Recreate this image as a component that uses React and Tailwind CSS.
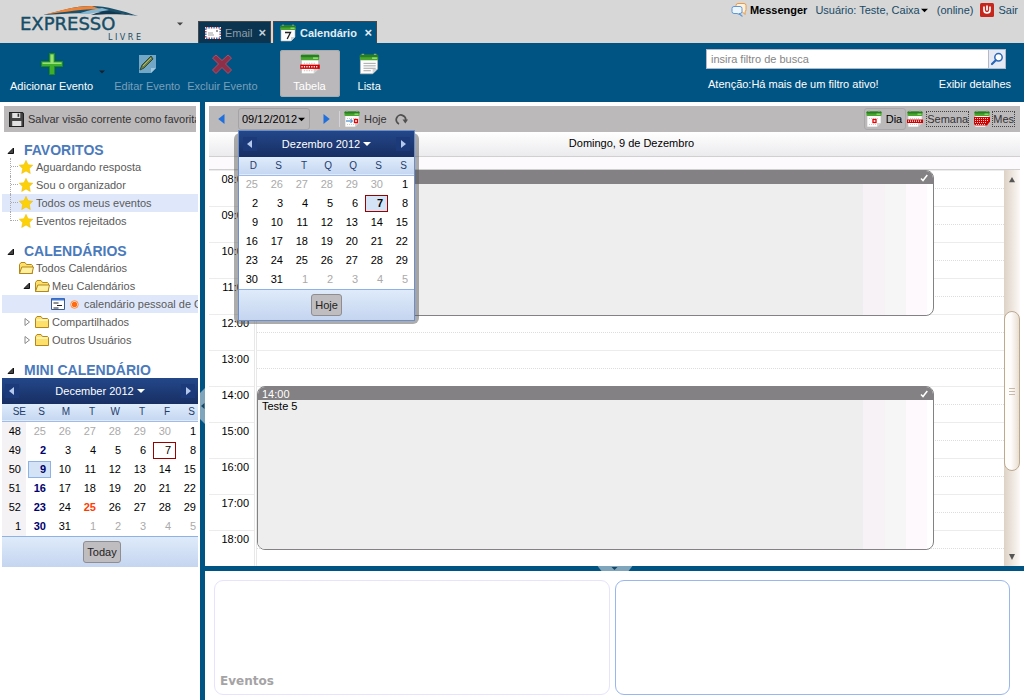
import React from "react";

function CalIcon({ kind, className = "h-[18px] w-4" }) {
  return (
    <svg viewBox="0 0 16 18" className={`${className} shrink-0`} aria-hidden="true">
      <path d="M1 4h14v9l-4 4H1z" fill="#fdfdfd" stroke="#b9b9b9" strokeWidth=".6" />
      <path d="M11 17v-4h4z" fill="#d3d3d3" />
      <rect x=".5" y="1.500" width="15" height="4.500" rx=".8" fill="#4aa52f" />
      <rect x=".5" y="1.500" width="15" height="2" rx=".8" fill="#277f22" />
      <path d="M2 1.200h2M12 1.200h2" stroke="#8aa886" strokeWidth="1" />
      <rect x="10.500" y="3.600" width="4" height="1.200" fill="#9be07c" />
      {kind !== "list" && kind !== "seven" && (
        <path d="M3 8.500h10M3 14.500h8" stroke="#ccc" strokeDasharray="1 1" />
      )}
      {kind === "day" && <rect x="7" y="9.500" width="3" height="3" fill="#fff" stroke="#e00" strokeWidth="1.300" />}
      {kind === "week" && (
        <>
          <rect x="0" y="9.500" width="16" height="3.500" fill="#d40000" />
          <path d="M1 11.200h14" stroke="#fff" strokeDasharray="1 1" strokeWidth="1.200" />
        </>
      )}
      {kind === "month" && (
        <>
          <path d="M0 7h16v4.500l-3 4H1.500L0 14z" fill="#d40000" />
          <path d="M1 8.500h14M1 10.500h14M1 12.500h12M2 14.500h10" stroke="#fff" strokeDasharray="1 1" strokeWidth=".8" />
        </>
      )}
      {kind === "today" && (
        <>
          <path d="M2 11h6M6.500 9l2 2-2 2" stroke="#2577c8" fill="none" />
          <rect x="10.500" y="9.500" width="3" height="3" fill="#fff" stroke="#e00" strokeWidth="1.300" />
        </>
      )}
      {kind === "list" && <path d="M3.500 8.500h10M3.500 10.500h10M3.500 12.500h10M3.500 14.500h6" stroke="#999" strokeWidth=".7" />}
      {kind === "seven" && <path d="M5 8.500h5.500L7.200 15" fill="none" stroke="#222" strokeWidth="1.300" />}
    </svg>
  );
}

function Tri({ dir = "down", className = "" }) {
  const d = { down: "M0 2h8L4 6z", left: "M6 0v8L1 4z", right: "M2 0v8l5-4z", up: "M0 7h8L4 0z" }[dir];
  return (
    <svg viewBox="0 0 8 8" className={`shrink-0 ${className}`} aria-hidden="true">
      <path d={d} fill="currentColor" />
    </svg>
  );
}

function Expander({ open }) {
  return (
    <svg viewBox="0 0 8 8" className="size-2 shrink-0" aria-hidden="true">
      {open ? <path d="M6.500 1v5.500H1z" fill="#444" stroke="#111" /> : <path d="M2 .5v7L6.500 4z" fill="#fff" stroke="#888" />}
    </svg>
  );
}

function Star() {
  return (
    <svg viewBox="0 0 14 14" className="size-[14px] shrink-0" aria-hidden="true">
      <path d="M7 .3l2 4.400 4.800.5-3.500 3.300 1 5L7 11l-4.300 2.500 1-5L.2 5.200 5 4.700z" fill="#fcd106" stroke="#eeb600" strokeWidth=".5" />
    </svg>
  );
}

function Folder({ open }) {
  return (
    <svg viewBox="0 0 16 14" className="h-[14px] w-4 shrink-0" aria-hidden="true">
      <path d="M1.500 12.500v-9l1.500-2h4l1.500 2h5l1 1v8z" fill="#fce06a" stroke="#b3871b" />
      {open ? (
        <path d="M1.500 12.500l2.300-6.500h11.700l-1.500 6.500z" fill="#fff0a0" stroke="#b3871b" />
      ) : (
        <path d="M2.500 5h11" stroke="#fff8cc" strokeWidth="1.500" />
      )}
    </svg>
  );
}

function Logo() {
  return (
    <svg viewBox="0 0 130 42" className="h-[42px] w-[130px]" role="img" aria-label="Expresso Livre">
      <path d="M28 15C46 11 59 6 76 6c16 0 32 5 47 10-14-2-26-4-33-4-18 0-35 2-62 3z" fill="#1a506a" />
      <path d="M30 14.500C48 10 60 6 77 6l8 3c-18 0-34 3-55 5.500z" fill="#f08335" />
      <path d="M62 14c10-3 16-5 25-6l7 2c-8 1-14 3-20 4z" fill="#86b6d0" />
      <path d="M76 15c8-3 12-4 18-4l25 4.500C105 14 92 14 76 15z" fill="#12384f" />
      <text x="5" y="30" fontFamily="DejaVu Sans" fontSize="18" fill="#164d67" stroke="#164d67" strokeWidth=".4">EXPRESSO</text>
      <text x="126" y="40" textAnchor="end" fontFamily="DejaVu Sans" fontSize="8" fill="#164d67">L I V R E</text>
    </svg>
  );
}

const MONTH = [
  [25, 26, 27, 28, 29, 30, 1],
  [2, 3, 4, 5, 6, 7, 8],
  [9, 10, 11, 12, 13, 14, 15],
  [16, 17, 18, 19, 20, 21, 22],
  [23, 24, 25, 26, 27, 28, 29],
  [30, 31, 1, 2, 3, 4, 5],
];
const WEEKS = [48, 49, 50, 51, 52, 1];

function dayStyle(r, c, n, mini) {
  const outside = (r === 0 && n > 20) || (r === 5 && n < 10);
  const isToday = r === 1 && c === 5;
  let text = outside ? "text-[#aaa]" : "text-black";
  if (mini && c === 0 && !outside) text = "font-bold text-[#000070]";
  if (mini && r === 4 && c === 2) text = "font-bold text-[#ff3c00]";
  let box = "border-transparent";
  if (isToday) box = mini ? "border-[#990000]" : "border-[#990000] bg-[#d5e3f6] font-bold";
  if (mini && r === 2 && c === 0) box = "border-[#8db2e3] bg-[#d5e3f6]";
  return `${box} ${text}`;
}

function DatePicker({ title, days, mini, today }) {
  return (
    <div className="overflow-hidden bg-white">
      <div className={mini ? "w-[200px]" : "w-[175px]"}>
        <div className={`flex h-[26px] items-center justify-between bg-linear-to-b from-[#23478a] to-[#182f63] text-white ${mini ? "pr-[7px] pl-[3px]" : "px-1"}`}>
          <button aria-label="◀" className="grid size-[14px] place-items-center bg-[#1c3a7a] text-[#b5c9ec]"><Tri dir="left" className="size-2" /></button>
          <button className="flex items-center gap-[3px]">{title}<Tri className="size-2" /></button>
          <button aria-label="▶" className="grid size-[14px] place-items-center bg-[#1c3a7a] text-[#b5c9ec]"><Tri dir="right" className="size-2" /></button>
        </div>
        <table className="w-full table-fixed border-collapse text-right">
          <thead>
            <tr className={`border-b border-[#a3bae9] bg-linear-to-b from-[#dfecfb] to-[#c6d7f1] text-[10px] text-[#233d6d] ${mini ? "h-[17px]" : "h-[18px]"}`}>
              {mini && <th className="p-0 pr-px font-normal">SE</th>}
              {days.map((d, i) => <th key={i} className="p-0 pr-[7px] font-normal">{d}</th>)}
            </tr>
          </thead>
          <tbody>
            {MONTH.map((row, r) => (
              <tr key={r} className="h-[19px]">
                {mini && <td className="p-0 pr-px"><div className="h-[19px] bg-[#f5f2f6] pr-[5px] leading-[19px] text-black">{WEEKS[r]}</div></td>}
                {row.map((n, c) => (
                  <td key={c} className="p-0">
                    <div className={`mx-px h-[17px] border pr-1 leading-[15px] ${dayStyle(r, c, n, mini)}`}>{n}</div>
                  </td>
                ))}
              </tr>
            ))}
          </tbody>
        </table>
        <div className="flex h-[31px] items-center justify-center border-t border-[#8db2e3] bg-linear-to-b from-[#dfebfa] to-[#c5d5f0]">
          <button className="h-[22px] rounded-[3px] border border-[#8f8d8f] bg-[#bfbdbf] px-[3px] text-[#222]">{today}</button>
        </div>
      </div>
    </div>
  );
}

function SectionTitle({ children }) {
  return (
    <h2 className="flex h-[15px] items-center gap-[9px] pl-[5px] text-[14px] leading-[15px] font-bold text-[#4a7abb]">
      <Expander open />
      {children}
    </h2>
  );
}

function Sidebar() {
  const favs = ["Aguardando resposta", "Sou o organizador", "Todos os meus eventos", "Eventos rejeitados"];
  return (
    <aside className="w-[200px] shrink-0 px-[2px] pt-1 text-[#5a5a5a]">
      <button className="mx-[2px] flex h-[26px] w-[192px] items-center gap-1 overflow-hidden bg-[#bcb9bb] pl-[5px] whitespace-nowrap text-[#333]">
        <svg viewBox="0 0 14 14" className="size-[15px] shrink-0" aria-hidden="true">
          <path d="M.5.5h12l1 1v12H.5z" fill="#444" stroke="#222" />
          <path d="M3 1h7.500v4.500H3zM3 8.500h8.500V13H3z" fill="#e2e2e2" />
          <path d="M8 1.500h1.500v3H8z" fill="#333" />
        </svg>
        Salvar visão corrente como favorita
      </button>
      <div className="mt-[11px]">
        <SectionTitle>FAVORITOS</SectionTitle>
        <ul>
          {favs.map((f, i) => (
            <li key={f} className={`flex h-[18px] items-start pl-2 ${i === 2 ? "bg-[#dfe8fb]" : ""}`}>
              <span className={`flex w-[9px] items-end border-l border-dotted border-[#aaa] ${i === 3 ? "h-[9px]" : "h-[18px]"}`}>
                <span className={`w-[7px] border-t border-dotted border-[#aaa] ${i === 3 ? "" : "mb-[9px]"}`} />
              </span>
              <span className="flex h-[18px] items-center gap-[3px]"><Star /><a href="#">{f}</a></span>
            </li>
          ))}
        </ul>
      </div>
      <div className="mt-[14px]">
        <SectionTitle>CALENDÁRIOS</SectionTitle>
        <ul className="whitespace-nowrap">
          <li className="flex h-[18px] items-center gap-[2px] pl-4"><Folder open />Todos Calendários</li>
          <li className="flex h-[18px] items-center gap-[3px] pl-[21px]"><Expander open /><span className="flex items-center gap-[2px]"><Folder open />Meu Calendários</span></li>
          <li className="flex h-[18px] items-center gap-[5px] overflow-hidden bg-[#dfe8fb] pl-[49px]">
            <svg viewBox="0 0 14 14" className="size-[14px] shrink-0" aria-hidden="true">
              <path d="M.5 1.500h13v11H.5z" fill="#fff" stroke="#3d5a8c" />
              <path d="M1 2.500h12" stroke="#3e7be0" strokeWidth="2" />
              <path d="M2.500 6h5M6 8.500h5M2.500 11h5" stroke="#222" />
            </svg>
            <svg viewBox="0 0 9 9" className="size-[9px] shrink-0" aria-hidden="true">
              <circle cx="4.500" cy="4.500" r="3.800" fill="#fff" stroke="#ff8a40" strokeWidth="1" />
              <circle cx="4.500" cy="4.500" r="2.700" fill="#ff6a10" />
            </svg>
            <span>calendário pessoal de Caixa</span>
          </li>
          <li className="flex h-[18px] items-center gap-[3px] pl-[21px]"><Expander /><span className="flex items-center gap-[2px]"><Folder />Compartilhados</span></li>
          <li className="flex h-[18px] items-center gap-[3px] pl-[21px]"><Expander /><span className="flex items-center gap-[2px]"><Folder />Outros Usuários</span></li>
        </ul>
      </div>
      <div className="mt-[14px]">
        <SectionTitle>MINI CALENDÁRIO</SectionTitle>
        <DatePicker title="December 2012" days={["S", "M", "T", "W", "T", "F", "S"]} mini today="Today" />
      </div>
    </aside>
  );
}

function Event({ time, title, className }) {
  return (
    <article className={`z-10 col-start-2 mr-[70px] flex flex-col overflow-hidden rounded-lg border border-[#838183] bg-white ${className}`}>
      <header className="flex h-[13px] shrink-0 items-center justify-between bg-[#838183] pr-[5px] pl-1 text-white">
        <span>{time}</span>
        <svg viewBox="0 0 8 8" className="size-2" aria-hidden="true"><path d="M1 4.500l2 2L7.300 1" fill="none" stroke="#fff" strokeWidth="1.500" /></svg>
      </header>
      <div className="flex flex-1">
        <div className="flex-1 bg-[#eee] px-1 leading-[13px] text-black">{title}</div>
        <div className="w-[22px] bg-[#f6f2f6]" />
        <div className="w-[21px] bg-[#f7f6f7]" />
        <div className="w-[21px] bg-[#fdf9fd]" />
        <div className="w-[6px]" />
      </div>
    </article>
  );
}

function DayGrid() {
  const hours = ["08:00", "09:00", "10:00", "11:00", "12:00", "13:00", "14:00", "15:00", "16:00", "17:00", "18:00"];
  return (
    <div className="flex h-[396px]">
      <div className="grid flex-1 grid-cols-[48px_1fr] grid-rows-[repeat(11,36px)]">
        <div className="col-start-1 row-span-11 row-start-1 border-r border-[#e8e8e8] pr-px">
          <ol className="border-r border-[#e8e8e8]">
            {hours.map((h) => (
              <li key={h} className="h-9 border-t border-[#ececec] pt-px pr-[5px] text-right text-black">{h}</li>
            ))}
          </ol>
        </div>
        <div className="col-start-2 row-span-11 row-start-1">
          {hours.map((h) => (
            <div key={h} className="flex h-9 items-center border-t border-[#ececec]">
              <div className="w-full border-t border-dotted border-[#ddd]" />
            </div>
          ))}
        </div>
        <Event className="row-span-4 row-start-1 -mb-[2px]" />
        <Event time="14:00" title="Teste 5" className="row-span-5 row-start-7 mb-4" />
      </div>
      <div className="flex w-4 flex-col items-center bg-linear-to-r from-[#ddd2c4] to-[#fdf9f8] text-[#555]">
        <button aria-label="▲" className="grid h-[141px] place-items-start pt-[7px]"><Tri dir="up" className="size-[6px]" /></button>
        <div className="flex h-40 w-4 flex-col items-center justify-center gap-[2px] rounded-lg border border-[#bda98f] bg-linear-to-r from-[#fffdfc] from-40% to-[#e9ddd1]">
          <div className="h-px w-[6px] bg-[#c9b9a8]" />
          <div className="h-px w-[6px] bg-[#c9b9a8]" />
          <div className="h-px w-[6px] bg-[#c9b9a8]" />
        </div>
        <button aria-label="▼" className="mt-auto pb-[6px]">
          <svg viewBox="0 0 6 6" className="size-[6px]" aria-hidden="true"><path d="M0 0h6L3 6z" fill="currentColor" /></svg>
        </button>
      </div>
    </div>
  );
}

function DayToolbar() {
  return (
    <div className="relative flex h-[26px] items-center bg-[#bcb9bb] pr-[5px] pl-2 text-[#333]">
      <button aria-label="◀" className="text-[#1f6fdd]"><Tri dir="left" className="size-[10px]" /></button>
      <button className="ml-[11px] flex h-[22px] w-[72px] items-center gap-px rounded-[3px] border border-[#a5a3a5] pl-[3px] text-black">09/12/2012<Tri className="size-[7px]" /></button>
      <button aria-label="▶" className="ml-[11px] text-[#1f6fdd]"><Tri dir="right" className="size-[10px]" /></button>
      <span className="ml-2 h-4 border-l border-[#d5d3d5]" />
      <button className="ml-1 flex items-center gap-1"><CalIcon kind="today" />Hoje</button>
      <button aria-label="↻" className="ml-2">
        <svg viewBox="0 0 13 13" className="size-[13px]" aria-hidden="true">
          <path d="M4 11A4.700 4.700 0 1 1 10.500 8" fill="none" stroke="#505050" strokeWidth="1.800" />
          <path d="M7.500 6.500H13L10.300 10.500z" fill="#505050" />
        </svg>
      </button>
      <div className="ml-auto flex items-center gap-px">
        <button className="flex h-[22px] items-center gap-1 rounded-[3px] border border-[#a9a7a9] pr-[3px] pl-px text-black"><CalIcon kind="day" />Dia</button>
        <button className="flex items-center gap-[3px]"><CalIcon kind="week" /><span className="border border-dotted border-[#444]">Semana</span></button>
        <button className="ml-1 flex items-center gap-[2px]"><CalIcon kind="month" /><span className="border border-dotted border-[#444]">Mes</span></button>
      </div>
      <div className="absolute top-6 left-[29px] z-30 w-[177px]">
        <div className="absolute top-[3px] -right-1 -bottom-[3px] -left-1 rounded-md bg-[#5a5a5a]/50" />
        <div className="relative border border-[#6d8fc9]">
          <DatePicker title="Dezembro 2012" days={["D", "S", "T", "Q", "Q", "S", "S"]} today="Hoje" />
        </div>
      </div>
    </div>
  );
}

function TopBar() {
  return (
    <header className="flex h-[43px] justify-between bg-[#d7d7d7] text-[#174a66]">
      <div className="flex items-end">
        <div className="self-start pl-[15px]"><Logo /></div>
        <button aria-label="▾" className="mb-4 ml-8 text-[#444]"><Tri className="size-[6px]" /></button>
        <nav className="ml-[15px] flex gap-[2px]">
          <a href="#" className="flex h-[22px] w-[73px] items-center border border-b-0 border-[#484848] bg-[#0b3450] pl-[6px] text-[#8d9ca6]">
            <svg viewBox="0 0 16 12" className="h-3 w-4" aria-hidden="true">
              <rect x="0" y="0" width="16" height="12" fill="#fff" />
              <path d="M.8.800h14.400v10.400H.8z" fill="none" stroke="#d33" strokeDasharray="1.500 3.500" strokeWidth="1.500" />
              <path d="M.8.800h14.400v10.400H.8z" fill="none" stroke="#37c" strokeDasharray="1.500 3.500" strokeDashoffset="2.500" strokeWidth="1.500" />
              <path d="M3 6h5M3 8h6" stroke="#888" strokeWidth=".8" /><rect x="11" y="3" width="2" height="2" fill="#999" />
            </svg>
            <span className="pl-1">Email</span>
            <span className="ml-auto pr-1 text-[13px] font-bold text-[#c4d0d8]">×</span>
          </a>
          <a href="#" className="flex h-[22px] w-[104px] items-center border border-b-0 border-[#484848] bg-[#005483] pl-[6px] font-bold text-[#e2edf4]">
            <CalIcon kind="seven" />
            <span className="pl-1">Calendário</span>
            <span className="ml-auto pr-1 text-[13px]">×</span>
          </a>
        </nav>
      </div>
      <div className="flex h-5 items-center pr-[6px]">
        <svg viewBox="0 0 16 16" className="mr-[3px] size-4" aria-hidden="true">
          <path d="M7 1.500h6q2 0 2 2v4q0 2-1 2v3l-3-3H7q-2 0-2-2v-4q0-2 2-2z" fill="#fff1dc" stroke="#e89a45" />
          <path d="M3 4.500h6q2 0 2 2v3q0 2-2 2H8l3 3v-1l-5-2H3q-2 0-2-2v-3q0-2 2-2z" fill="#edf5ff" stroke="#5f97d4" />
        </svg>
        <a href="#" className="font-bold text-black">Messenger</a>
        <button className="ml-2 flex items-center gap-px">Usuário: Teste, Caixa<Tri className="size-[7px] text-black" /></button>
        <span className="ml-[9px]">(online)</span>
        <svg viewBox="0 0 14 14" className="ml-[7px] size-[14px]" aria-hidden="true">
          <rect width="14" height="14" rx="1.500" fill="#c5271c" />
          <path d="M4 3.500v3.500a3 3 0 0 0 6 0V3.500M7 2.500v5" fill="none" stroke="#fff" strokeWidth="1.700" />
        </svg>
        <a href="#" className="ml-1">Sair</a>
      </div>
    </header>
  );
}

function Action({ label, className = "", children }) {
  return (
    <button className={`flex h-[47px] flex-col items-center justify-between pt-[3px] text-[11px] ${className}`}>
      {children}
      <span className="pb-1">{label}</span>
    </button>
  );
}

function Ribbon() {
  return (
    <div className="flex h-[59px] justify-between bg-[#005483] text-white">
      <div className="flex items-start pt-[7px] pl-[10px]">
        <Action label="Adicionar Evento">
          <svg viewBox="0 0 22 22" className="size-[22px]" aria-hidden="true">
            <path d="M8.500.5h5v8h8v5h-8v8h-5v-8h-8v-5h8z" fill="#3fae2d" stroke="#1f8a17" />
            <path d="M9.500 1.500h3v8h8v1.500h-19V9.500h8z" fill="#98df79" />
          </svg>
        </Action>
        <Tri className="mt-[19px] ml-[6px] size-[6px] text-[#18202a]" />
        <Action label="Editar Evento" className="ml-[9px] text-[#7a9fb8]">
          <svg viewBox="0 0 22 22" className="size-[22px] opacity-80" aria-hidden="true">
            <path d="M3 2h17v13l-5 5H3z" fill="#8fbdd6" /><path d="M15 20v-5h5z" fill="#c9e4f2" />
            <path d="M4 17l2-5 9-9 2 3-9 9z" fill="#8b8a33" stroke="#35472f" /><path d="M7 13l8-8" stroke="#d6d36c" />
          </svg>
        </Action>
        <Action label="Excluir Evento" className="ml-[7px] text-[#7a9fb8]">
          <svg viewBox="0 0 22 22" className="size-[22px]" aria-hidden="true">
            <path d="M5 2l6 5.500L17 2l3.500 3-6 6 6 6-3.500 3.500-6-6-6 6L1.500 17l6-6-6-6z" fill="#8e2f49" stroke="#b24d63" />
          </svg>
        </Action>
        <Action label="Tabela" className="ml-[22px] w-[60px] rounded-[3px] bg-[#bab8ba] ring-1 ring-[#aaa] ring-inset">
          <CalIcon kind="week" className="h-[22px] w-5" />
        </Action>
        <Action label="Lista" className="ml-[18px]"><CalIcon kind="list" className="h-[22px] w-5" /></Action>
      </div>
      <div className="w-[318px] pt-[6px] pr-[13px]">
        <div className="mr-[5px] flex h-5">
          <input aria-label="insira filtro de busca" placeholder="insira filtro de busca" className="min-w-0 flex-1 border border-[#b5b8c8] bg-white px-1 text-[11px] placeholder:text-[#858585]" />
          <button aria-label="🔍" className="grid w-[17px] place-items-center border border-l-0 border-[#b5b8c8] bg-[#e4e9f3]">
            <svg viewBox="0 0 14 14" className="size-[14px]" aria-hidden="true">
              <circle cx="8.500" cy="5.300" r="3.700" fill="#fff" stroke="#2a66b8" strokeWidth="1.500" />
              <path d="M5.800 8.200L2 12" stroke="#2a66b8" strokeWidth="2.200" strokeLinecap="round" />
            </svg>
          </button>
        </div>
        <div className="flex items-baseline justify-between pt-2 pl-[2px]">
          <span>Atenção:Há mais de um filtro ativo!</span>
          <a href="#">Exibir detalhes</a>
        </div>
      </div>
    </div>
  );
}

export default function App() {
  return (
    <div className="flex min-h-screen flex-col bg-white font-['Liberation_Sans',sans-serif] text-[11px] leading-[14px]">
      <TopBar />
      <Ribbon />
      <main className="flex flex-1">
        <Sidebar />
        <div className="relative w-[5px] shrink-0 bg-[#005483]">
          <button aria-label="◂" className="absolute top-[286px] left-0">
            <svg viewBox="0 0 5 36" className="h-9 w-[5px]" aria-hidden="true">
              <path d="M0 5L5 0v36L0 31z" fill="#7fa5bd" /><path d="M4.500 15v6L1 18z" fill="#164663" />
            </svg>
          </button>
        </div>
        <div className="flex min-w-0 flex-1 flex-col">
          <section className="px-1 pt-1">
            <DayToolbar />
            <div className="flex h-[25px] items-center border-b border-[#d0d0d0] bg-linear-to-b from-white to-[#ebebee] pl-[34px] text-black">
              <h1 className="flex-1 pb-[2px] text-center">Domingo, 9 de Dezembro</h1>
            </div>
            <div className="h-[13px] border-b border-[#cfcfcf] bg-[#fdfafd]" />
            <DayGrid />
          </section>
          <div className="relative h-[5px] bg-[#005483]">
            <button aria-label="▾" className="absolute top-0 left-1/2 -translate-x-1/2">
              <svg viewBox="0 0 35 5" className="h-[5px] w-[35px]" aria-hidden="true">
                <path d="M0 0h35l-4 5H4z" fill="#7fa5bd" /><path d="M14 1h6l-3 3z" fill="#164663" />
              </svg>
            </button>
          </div>
          <section className="grid flex-1 grid-cols-2 gap-[5px] pt-[9px] pr-[14px] pb-[5px] pl-[9px]">
            <div className="flex items-end rounded-[9px] border border-[#e6e3fb] px-[5px] pb-[6px]">
              <h2 className="font-['DejaVu_Sans',sans-serif] text-[12px] leading-[14px] font-bold text-[#a5a3a5]">Eventos</h2>
            </div>
            <div className="rounded-[9px] border border-[#99b6ee]" />
          </section>
        </div>
      </main>
    </div>
  );
}
